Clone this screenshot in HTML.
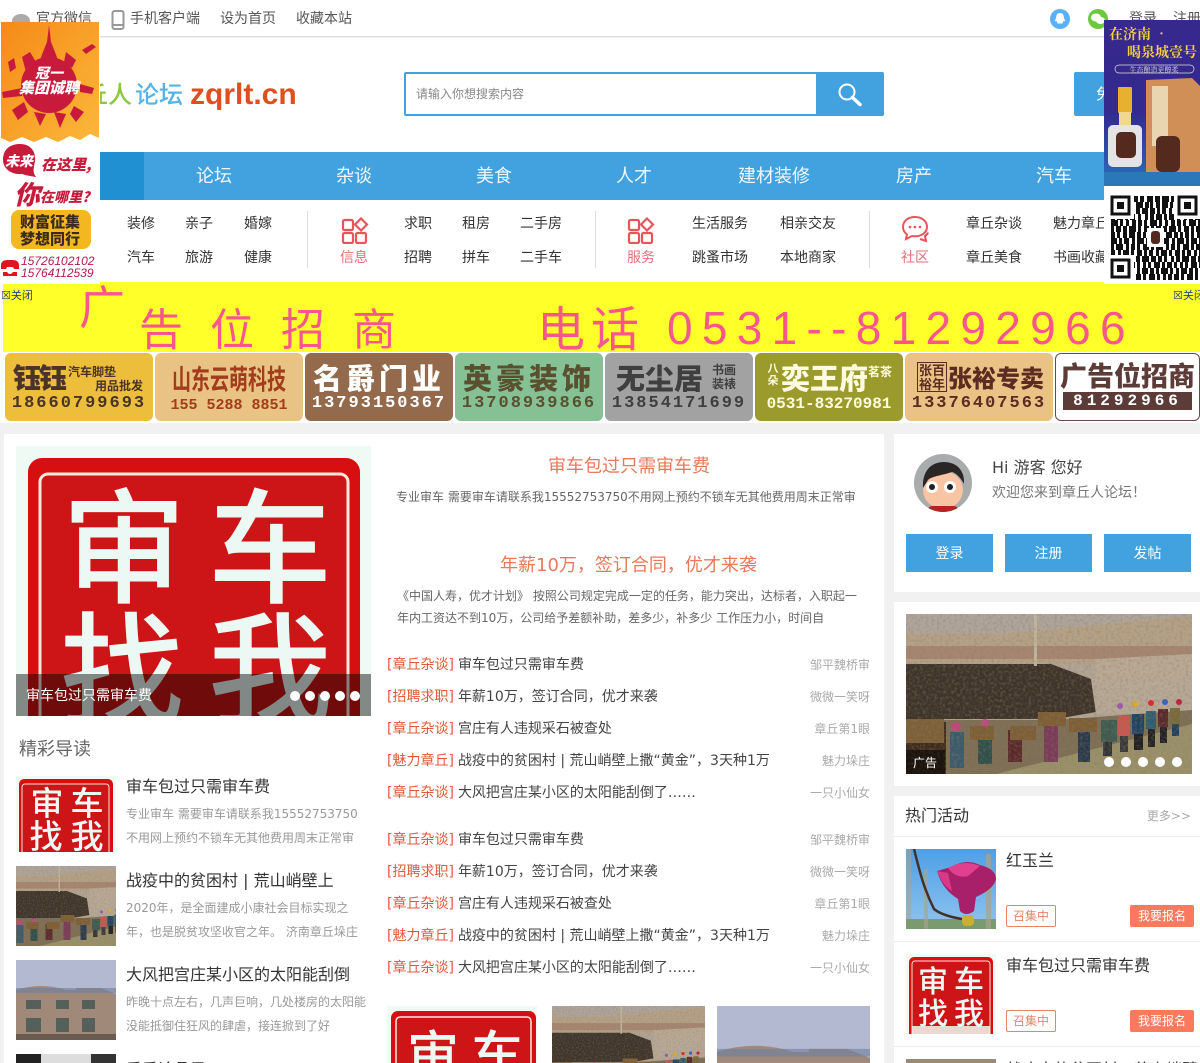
<!DOCTYPE html>
<html lang="zh">
<head>
<meta charset="utf-8">
<title>章丘人论坛</title>
<style>
html,body{margin:0;padding:0;width:1200px;height:1063px;overflow:hidden;}
#p{width:1200px;height:1063px;position:relative;overflow:hidden;background:#f1f1f1;font-family:"DejaVu Sans","WenQuanYi Zen Hei","Noto Sans CJK SC",sans-serif;color:#333;}
.a{position:absolute;white-space:nowrap;line-height:20px;}
.b{position:absolute;}
.sub{font-size:14px;color:#333;}
.nav{font-size:18px;color:#fff;width:100px;text-align:center;top:167px;opacity:.92;}
.li{font-size:14px;color:#444;left:387px;}
.li span{color:#e0593a;margin-right:4px;}
.au{font-size:12px;color:#aaa;right:330px;}
.t1{font-size:16px;color:#333;left:126px;}
.d1{font-size:12px;color:#999;left:126px;width:232px;overflow:hidden;}
.tile{position:absolute;top:353px;width:148px;height:68px;border-radius:6px;overflow:hidden;text-align:center;font-family:"Noto Sans CJK SC",sans-serif;font-weight:900;}
.tile .h{position:absolute;left:0;right:0;top:6px;font-size:29px;line-height:36px;white-space:nowrap;}
.tile .s{position:absolute;white-space:nowrap;font-size:12px;line-height:14px;font-weight:700;}
.tile .p{position:absolute;left:0;right:0;top:41px;font-size:17px;line-height:20px;font-family:"Liberation Mono",monospace;font-weight:700;letter-spacing:2px;white-space:nowrap;}
.btn{position:absolute;top:534px;width:87px;height:38px;background:#42a2df;color:#fff;font-size:14px;line-height:40px;text-align:center;overflow:hidden;}
.zj{position:absolute;left:1006px;width:48px;height:20px;border:1px solid #e8836b;border-radius:2px;color:#e8836b;font-size:12px;line-height:20px;text-align:center;}
.bm{position:absolute;left:1130px;width:64px;height:22px;background:#fb7a5e;border-radius:2px;color:#fff;font-size:12px;line-height:22px;text-align:center;}
.dot{position:absolute;border-radius:50%;background:#fff;}
</style>
</head>
<body>
<div id="p">
<svg width="0" height="0" style="position:absolute">
<defs>
<filter id="noise" x="0" y="0" width="100%" height="100%"><feTurbulence type="fractalNoise" baseFrequency=".35" numOctaves="2" seed="4"/><feColorMatrix values="0 0 0 0 0.25 0 0 0 0 0.2 0 0 0 0 0.15 0 0 0 1 -.42"/></filter>
<symbol id="hill" viewBox="0 0 286 160" preserveAspectRatio="xMidYMin slice">
<rect width="286" height="160" fill="#b3a594"/>
<rect width="286" height="18" fill="#b0a59b"/>
<path d="M0 20H75L95 20 286 2V70L200 50 0 50Z" fill="#b5a186"/>
<path d="M0 32H286V45H0Z" fill="#a3806a" opacity=".8"/>
<path d="M190 45L286 40V100H190Z" fill="#baa994"/>
<path d="M0 50H145L185 65 190 98 150 105H0Z" fill="#3e3429"/>
<path d="M185 65H286V100H190Z" fill="#b8a996"/>
<path d="M0 106H150L286 96V160H0Z" fill="#7d6e54"/>
<path d="M90 160L286 110V160Z" fill="#9a9068"/>
<rect x="128" y="0" width="3" height="52" fill="#c0b49a"/>
<g>
<rect x="0" y="108" width="40" height="52" fill="#3e2c1e"/><rect x="0" y="105" width="38" height="24" fill="#7d6038"/>
<circle cx="50" cy="113" r="5" fill="#c0457a"/><rect x="44" y="118" width="14" height="36" fill="#3b5a6a"/>
<circle cx="79" cy="109" r="4" fill="#c04a80"/><rect x="72" y="114" width="14" height="36" fill="#2f4f4a"/><rect x="64" y="112" width="24" height="14" fill="#7e5e34"/>
<rect x="102" y="116" width="14" height="32" fill="#5a2a28"/><rect x="104" y="112" width="26" height="14" fill="#7e5e34"/>
<rect x="132" y="98" width="28" height="14" fill="#7e5e34"/><rect x="138" y="112" width="14" height="36" fill="#7a3a58"/>
<rect x="163" y="104" width="28" height="14" fill="#7e5e34"/><rect x="172" y="118" width="12" height="30" fill="#2a3a4a"/>
<rect x="195" y="106" width="16" height="22" fill="#3f5a50"/><rect x="197" y="128" width="9" height="14" fill="#333"/>
<rect x="212" y="102" width="12" height="20" fill="#c8574f"/><rect x="214" y="122" width="8" height="16" fill="#3a3a3a"/>
<rect x="226" y="100" width="12" height="20" fill="#1f4460"/><rect x="228" y="120" width="9" height="16" fill="#222"/>
<rect x="240" y="97" width="10" height="18" fill="#2a6070"/><rect x="242" y="115" width="7" height="18" fill="#222"/>
<rect x="252" y="95" width="10" height="18" fill="#5a2a2a"/><rect x="254" y="113" width="7" height="16" fill="#222"/>
<rect x="264" y="94" width="10" height="16" fill="#7a6a3a"/><rect x="266" y="110" width="7" height="12" fill="#245"/>
<circle cx="214" cy="92" r="3" fill="#9a5ab0"/><circle cx="229" cy="90" r="3" fill="#e0b020"/><circle cx="245" cy="89" r="3" fill="#e02830"/><circle cx="259" cy="88" r="3" fill="#3a60c0"/><circle cx="273" cy="88" r="3" fill="#c02040"/>
</g>
<rect width="286" height="160" filter="url(#noise)"/>
</symbol>
<symbol id="bld" viewBox="0 0 100 80" preserveAspectRatio="xMidYMin slice">
<rect width="100" height="80" fill="#b4b9d2"/>
<path d="M0 30Q25 22 50 30H60V28H85L100 34V80H0Z" fill="#a1897a"/>
<path d="M0 28H100V33H0Z" fill="#6a7ea0" opacity=".6"/>
<g fill="#55605a"><rect x="10" y="40" width="15" height="9"/><rect x="40" y="40" width="13" height="9"/><rect x="66" y="40" width="13" height="9"/><rect x="10" y="58" width="15" height="14"/><rect x="40" y="58" width="13" height="14"/><rect x="66" y="58" width="13" height="14"/></g>
<rect y="74" width="100" height="6" fill="#6a5a50"/>
</symbol>
</defs>
</svg>

<!-- header white area -->
<div class="b" style="left:0;top:0;width:1200px;height:423px;background:#fff"></div>
<div class="b" style="left:0;top:0;width:1200px;height:36px;background:#fff;border-bottom:1px solid #ddd;box-shadow:0 1px 1px #eee"></div>
<svg class="b" style="left:10px;top:12px" width="22" height="14"><ellipse cx="11" cy="9" rx="9" ry="7" fill="#aaa"/></svg>
<div class="a" style="left:36px;top:9px;font-size:14px;color:#555">官方微信</div>
<svg class="b" style="left:111px;top:10px" width="14" height="20"><rect x="1.500" y="1" width="11" height="18" rx="2" fill="none" stroke="#999" stroke-width="2"/><rect x="2" y="14" width="10" height="2" fill="#999"/></svg>
<div class="a" style="left:130px;top:9px;font-size:14px;color:#555">手机客户端</div>
<div class="a" style="left:220px;top:9px;font-size:14px;color:#555">设为首页</div>
<div class="a" style="left:296px;top:9px;font-size:14px;color:#555">收藏本站</div>
<svg class="b" style="left:1050px;top:9px" width="20" height="20"><circle cx="10" cy="10" r="10" fill="#5ab0fb"/><path d="M10 4c-2.800 0-3.800 2-3.800 4.400L4.800 12c.6.6 1 .2 1.400-.5.3 1 .9 1.700 1.400 2-.8.4-.6 1.200 1 1h2.800c1.600.2 1.800-.6 1-1 .5-.3 1.100-1 1.400-2 .4.700.8 1.100 1.400.500L13.800 8.400C13.800 6 12.800 4 10 4Z" fill="#fff"/></svg>
<svg class="b" style="left:1088px;top:9px" width="20" height="20"><circle cx="10" cy="10" r="10" fill="#6cc83c"/><ellipse cx="8" cy="8.500" rx="5" ry="4" fill="#fff"/><ellipse cx="12.500" cy="11.500" rx="4.500" ry="3.500" fill="#fff"/></svg>
<div class="a" style="left:1129px;top:9px;font-size:14px;color:#555">登录</div>
<div class="a" style="left:1173px;top:9px;font-size:14px;color:#555">注册</div>

<!-- logo -->
<div class="a" style="left:84px;top:76px;font-size:24px;line-height:34px;font-weight:500;font-family:'Noto Sans CJK SC',sans-serif;color:#8cc63f">丘人</div>
<div class="a" style="left:135px;top:76px;font-size:24px;line-height:34px;font-weight:500;font-family:'Noto Sans CJK SC',sans-serif;color:#55b4e6">论坛</div>
<div class="a" style="left:190px;top:78px;font-size:30px;line-height:34px;font-weight:700;font-family:'Liberation Sans',sans-serif;color:#df4f1d">zqrlt.cn</div>

<!-- search -->
<div class="b" style="left:404px;top:72px;width:476px;height:40px;border:2px solid #42a2df;border-radius:2px;background:#fff"></div>
<div class="a" style="left:416px;top:84px;font-size:12px;color:#888">请输入你想搜索内容</div>
<div class="b" style="left:816px;top:72px;width:68px;height:44px;background:#42a2df;border-radius:0 2px 2px 0"></div>
<svg class="b" style="left:836px;top:82px" width="28" height="26"><circle cx="11" cy="10" r="7.500" fill="none" stroke="#fff" stroke-width="2"/><path d="M16.500 15.500L24 22.500" stroke="#fff" stroke-width="3.500" stroke-linecap="round"/></svg>
<div class="b" style="left:1074px;top:72px;width:126px;height:44px;background:#42a2df;border-radius:2px 0 0 2px"></div>
<div class="a" style="left:1096px;top:84px;font-size:15px;color:#fff">免费发布</div>

<!-- nav -->
<div class="b" style="left:0;top:152px;width:1200px;height:48px;background:#42a2df"></div>
<div class="b" style="left:0;top:152px;width:144px;height:48px;background:#2090d3"></div>
<div class="a nav" style="left:164px">论坛</div>
<div class="a nav" style="left:304px">杂谈</div>
<div class="a nav" style="left:444px">美食</div>
<div class="a nav" style="left:584px">人才</div>
<div class="a nav" style="left:724px">建材装修</div>
<div class="a nav" style="left:864px">房产</div>
<div class="a nav" style="left:1004px">汽车</div>

<!-- sub nav -->
<div class="a sub" style="left:127px;top:214px">装修</div>
<div class="a sub" style="left:185px;top:214px">亲子</div>
<div class="a sub" style="left:244px;top:214px">婚嫁</div>
<div class="a sub" style="left:127px;top:248px">汽车</div>
<div class="a sub" style="left:185px;top:248px">旅游</div>
<div class="a sub" style="left:244px;top:248px">健康</div>
<div class="b" style="left:307px;top:211px;width:1px;height:57px;background:#ddd"></div>
<svg class="b" style="left:341px;top:217px" width="28" height="27" fill="none" stroke="#e8545a" stroke-width="2.200"><rect x="2" y="3" width="10" height="10" rx="1.500"/><rect x="2" y="16" width="10" height="10" rx="1.500"/><rect x="15" y="16" width="10" height="10" rx="1.500"/><path d="M20 1.500L26 7.500 20 13.500 14 7.500Z"/></svg>
<div class="a" style="left:340px;top:248px;font-size:14px;color:#e2707a">信息</div>
<div class="a sub" style="left:404px;top:214px">求职</div>
<div class="a sub" style="left:462px;top:214px">租房</div>
<div class="a sub" style="left:520px;top:214px">二手房</div>
<div class="a sub" style="left:404px;top:248px">招聘</div>
<div class="a sub" style="left:462px;top:248px">拼车</div>
<div class="a sub" style="left:520px;top:248px">二手车</div>
<div class="b" style="left:595px;top:211px;width:1px;height:57px;background:#ddd"></div>
<svg class="b" style="left:627px;top:217px" width="28" height="27" fill="none" stroke="#e8545a" stroke-width="2.200"><rect x="2" y="3" width="10" height="10" rx="1.500"/><rect x="2" y="16" width="10" height="10" rx="1.500"/><rect x="15" y="16" width="10" height="10" rx="1.500"/><path d="M20 1.500L26 7.500 20 13.500 14 7.500Z"/></svg>
<div class="a" style="left:627px;top:248px;font-size:14px;color:#e2707a">服务</div>
<div class="a sub" style="left:692px;top:214px">生活服务</div>
<div class="a sub" style="left:780px;top:214px">相亲交友</div>
<div class="a sub" style="left:692px;top:248px">跳蚤市场</div>
<div class="a sub" style="left:780px;top:248px">本地商家</div>
<div class="b" style="left:869px;top:211px;width:1px;height:57px;background:#ddd"></div>
<svg class="b" style="left:900px;top:214px" width="32" height="30" fill="none" stroke="#e8545a" stroke-width="2"><path d="M15 3C8 3 3 7 3 13c0 3.500 2 6 4 7.500L6 25l6-3c1 .2 2 .3 3 .3 7 0 12-4 12-9.500S22 3 15 3Z"/><path d="M20 25l6 2-1-5c1.500-1 2.500-2 3-3.500" stroke-width="2"/><g fill="#e8545a" stroke="none"><circle cx="10" cy="13" r="1.300"/><circle cx="15" cy="13" r="1.300"/><circle cx="20" cy="13" r="1.300"/></g></svg>
<div class="a" style="left:901px;top:248px;font-size:14px;color:#e2707a">社区</div>
<div class="a sub" style="left:966px;top:214px">章丘杂谈</div>
<div class="a sub" style="left:1053px;top:214px">魅力章丘</div>
<div class="a sub" style="left:966px;top:248px">章丘美食</div>
<div class="a sub" style="left:1053px;top:248px">书画收藏</div>

<!-- yellow banner -->
<div class="b" style="left:3px;top:282px;width:1197px;height:70px;background:#ffff2a;overflow:hidden"></div>
<div class="a" style="left:79px;top:280px;font-size:46px;line-height:50px;color:#f9578c;font-family:'Noto Sans CJK SC',sans-serif;font-weight:400">广</div>
<div class="a" style="left:139px;top:301px;font-size:44px;line-height:50px;letter-spacing:27px;color:#f9578c;font-family:'Noto Sans CJK SC',sans-serif;font-weight:400">告位招商</div>
<div class="a" style="left:537px;top:300px;font-size:48px;line-height:50px;letter-spacing:6px;color:#f9578c;font-family:'Noto Sans CJK SC',sans-serif;font-weight:400">电话</div>
<div class="a" style="left:667px;top:303px;font-size:46px;line-height:50px;letter-spacing:9.300px;color:#f9578c;font-family:'Liberation Sans',sans-serif">0531--81292966</div>
<div class="a" style="left:1px;top:286px;font-size:11px;color:#247">☒关闭</div>
<div class="a" style="left:1173px;top:286px;font-size:11px;color:#247;width:27px;overflow:hidden">☒关闭</div>

<!-- tiles -->
<div class="tile" style="left:5px;background:#ecbe3c;color:#4a3328">
  <div class="h" style="text-align:left;padding-left:8px;letter-spacing:-2px;font-size:28px">钰钰</div>
  <div class="s" style="left:63px;top:12px">汽车脚垫</div><div class="s" style="left:90px;top:26px">用品批发</div>
  <div class="p">18660799693</div></div>
<div class="tile" style="left:155px;background:#e9c383;color:#a23c1c">
  <div class="h" style="font-size:19px;font-weight:700;transform:scaleY(1.45);top:8px">山东云萌科技</div>
  <div class="p" style="font-size:15px;letter-spacing:0;top:43px">155 5288 8851</div></div>
<div class="tile" style="left:305px;background:#936b4c;color:#fff"><div class="h" style="letter-spacing:4px">名爵门业</div><div class="p">13793150367</div></div>
<div class="tile" style="left:455px;background:#85c195;color:#5a5030"><div class="h" style="letter-spacing:4px">英豪装饰</div><div class="p">13708939866</div></div>
<div class="tile" style="left:605px;background:#a2a2a2;color:#3f3f3f">
  <div class="h" style="text-align:left;padding-left:11px">无尘居</div>
  <div class="s" style="left:107px;top:10px">书画</div><div class="s" style="left:107px;top:24px">装裱</div>
  <div class="p">13854171699</div></div>
<div class="tile" style="left:755px;background:#9b9a2d;color:#fffbe0">
  <div class="s" style="left:12px;top:9px;font-size:11px;line-height:12px;white-space:normal;width:12px">八朵</div>
  <div class="h" style="text-align:left;padding-left:26px">奕王府</div>
  <div class="s" style="left:113px;top:12px">茗茶</div>
  <div class="p" style="font-size:16px;letter-spacing:0">0531-83270981</div></div>
<div class="tile" style="left:905px;background:#eac286;color:#5c2c20">
  <div class="s" style="left:12px;top:9px;width:28px;white-space:normal;font-size:13px;line-height:14px;border:1px solid #5c2c20">张百裕年</div>
  <div class="h" style="text-align:left;padding-left:43px;font-size:24px">张裕专卖</div>
  <div class="p">13376407563</div></div>
<div class="tile" style="left:1055px;width:143px;background:#fff;border:1px solid #6b4a46;height:66px;color:#5c3c38"><div class="h" style="top:3px;font-size:27px">广告位招商</div><div class="p" style="left:7px;right:7px;top:38px;height:18px;line-height:18px;background:#5c3c38;color:#fff;letter-spacing:4px;font-size:16px">81292966</div></div>

<!-- main panels -->
<div class="b" style="left:4px;top:434px;width:880px;height:629px;background:#fff"></div>
<div class="b" style="left:894px;top:434px;width:306px;height:158px;background:#fff"></div>
<div class="b" style="left:894px;top:602px;width:306px;height:184px;background:#fff"></div>
<div class="b" style="left:894px;top:796px;width:306px;height:267px;background:#fff"></div>

<!-- large stamp -->
<svg class="b" style="left:16px;top:446px" width="355" height="270" viewBox="0 0 355 270">
<rect width="355" height="270" fill="#eefaf3"/>
<rect x="12" y="12" width="332" height="270" rx="14" fill="#d80f10"/>
<rect x="24" y="28" width="308" height="260" rx="8" fill="#cd1416" stroke="#f6e9dc" stroke-width="3"/>
<text x="108" y="147" text-anchor="middle" font-size="124" font-family="'Noto Sans CJK SC',sans-serif" font-weight="500" fill="#ecf8f4">审</text>
<text x="254" y="147" text-anchor="middle" font-size="124" font-family="'Noto Sans CJK SC',sans-serif" font-weight="500" fill="#ecf8f4">车</text>
<text x="106" y="270" text-anchor="middle" font-size="124" font-family="'Noto Sans CJK SC',sans-serif" font-weight="500" fill="#ecf8f4">找</text>
<text x="254" y="270" text-anchor="middle" font-size="124" font-family="'Noto Sans CJK SC',sans-serif" font-weight="500" fill="#ecf8f4">我</text>
</svg>
<div class="b" style="left:16px;top:674px;width:355px;height:42px;background:rgba(0,0,0,.45)"></div>
<div class="a" style="left:26px;top:686px;font-size:14px;color:#fff">审车包过只需审车费</div>
<div class="dot" style="left:290px;top:691px;width:10px;height:10px"></div>
<div class="dot" style="left:305px;top:691px;width:10px;height:10px"></div>
<div class="dot" style="left:320px;top:691px;width:10px;height:10px"></div>
<div class="dot" style="left:335px;top:691px;width:10px;height:10px"></div>
<div class="dot" style="left:350px;top:691px;width:10px;height:10px"></div>

<!-- guide -->
<div class="a" style="left:19px;top:740px;font-size:18px;color:#666">精彩导读</div>
<svg class="b" style="left:16px;top:776px" width="100" height="76" viewBox="0 0 100 76">
<rect width="100" height="76" fill="#eefaf3"/>
<rect x="3" y="3" width="94" height="90" rx="5" fill="#d80f10"/>
<rect x="6" y="8" width="87" height="85" rx="3" fill="#cd1416" stroke="#f6e9dc" stroke-width="1"/>
<text x="31" y="39" text-anchor="middle" font-size="33" font-family="'Noto Sans CJK SC',sans-serif" font-weight="500" fill="#ecf8f4">审</text>
<text x="71" y="39" text-anchor="middle" font-size="33" font-family="'Noto Sans CJK SC',sans-serif" font-weight="500" fill="#ecf8f4">车</text>
<text x="30" y="72" text-anchor="middle" font-size="33" font-family="'Noto Sans CJK SC',sans-serif" font-weight="500" fill="#ecf8f4">找</text>
<text x="71" y="72" text-anchor="middle" font-size="33" font-family="'Noto Sans CJK SC',sans-serif" font-weight="500" fill="#ecf8f4">我</text>
</svg>
<div class="a t1" style="top:777px">审车包过只需审车费</div>
<div class="a d1" style="top:804px">专业审车 需要审车请联系我15552753750</div>
<div class="a d1" style="top:828px">不用网上预约不锁车无其他费用周末正常审</div>
<svg class="b" style="left:16px;top:866px" width="100" height="80"><use href="#hill" width="100" height="80"/></svg>
<div class="a t1" style="top:871px">战疫中的贫困村 | 荒山峭壁上</div>
<div class="a d1" style="top:898px;width:222px">2020年，是全面建成小康社会目标实现之年</div>
<div class="a d1" style="top:922px">年，也是脱贫攻坚收官之年。 济南章丘垛庄</div>
<svg class="b" style="left:16px;top:960px" width="100" height="80"><use href="#bld" width="100" height="80"/></svg>
<div class="a t1" style="top:965px">大风把宫庄某小区的太阳能刮倒</div>
<div class="a d1" style="top:992px;width:242px">昨晚十点左右，几声巨响，几处楼房的太阳能</div>
<div class="a d1" style="top:1016px">没能抵御住狂风的肆虐，接连掀到了好</div>
<div class="b" style="left:16px;top:1054px;width:100px;height:9px;background:linear-gradient(90deg,#222 0 25%,#ddd 25% 75%,#333 75%)"></div>
<div class="a t1" style="top:1060px;height:3px;overflow:hidden">重重论品墨</div>

<!-- middle -->
<div class="a" style="left:548px;top:457px;font-size:18px;color:#e8795b">审车包过只需审车费</div>
<div class="a" style="left:396px;top:487px;font-size:12px;color:#666">专业审车 需要审车请联系我15552753750不用网上预约不锁车无其他费用周末正常审</div>
<div class="a" style="left:500px;top:556px;font-size:18px;color:#e8795b">年薪10万，签订合同，优才来袭</div>
<div class="a" style="left:397px;top:586px;font-size:12px;color:#666">《中国人寿，优才计划》 按照公司规定完成一定的任务，能力突出，达标者，入职起一</div>
<div class="a" style="left:397px;top:608px;font-size:12px;color:#666">年内工资达不到10万，公司给予差额补助，差多少，补多少 工作压力小，时间自</div>

<div class="a li" style="top:655px"><span>[章丘杂谈]</span>审车包过只需审车费</div><div class="a au" style="top:655px">邹平魏桥审</div>
<div class="a li" style="top:687px"><span>[招聘求职]</span>年薪10万，签订合同，优才来袭</div><div class="a au" style="top:687px">微微一笑呀</div>
<div class="a li" style="top:719px"><span>[章丘杂谈]</span>宫庄有人违规采石被查处</div><div class="a au" style="top:719px">章丘第1眼</div>
<div class="a li" style="top:751px"><span>[魅力章丘]</span>战疫中的贫困村 | 荒山峭壁上撒“黄金”，3天种1万</div><div class="a au" style="top:751px">魅力垛庄</div>
<div class="a li" style="top:783px"><span>[章丘杂谈]</span>大风把宫庄某小区的太阳能刮倒了……</div><div class="a au" style="top:783px">一只小仙女</div>

<div class="a li" style="top:830px"><span>[章丘杂谈]</span>审车包过只需审车费</div><div class="a au" style="top:830px">邹平魏桥审</div>
<div class="a li" style="top:862px"><span>[招聘求职]</span>年薪10万，签订合同，优才来袭</div><div class="a au" style="top:862px">微微一笑呀</div>
<div class="a li" style="top:894px"><span>[章丘杂谈]</span>宫庄有人违规采石被查处</div><div class="a au" style="top:894px">章丘第1眼</div>
<div class="a li" style="top:926px"><span>[魅力章丘]</span>战疫中的贫困村 | 荒山峭壁上撒“黄金”，3天种1万</div><div class="a au" style="top:926px">魅力垛庄</div>
<div class="a li" style="top:958px"><span>[章丘杂谈]</span>大风把宫庄某小区的太阳能刮倒了……</div><div class="a au" style="top:958px">一只小仙女</div>

<svg class="b" style="left:387px;top:1006px" width="150" height="57" viewBox="0 0 150 57">
<rect width="150" height="57" fill="#eefaf3"/>
<path d="M4 57V12a7 7 0 0 1 7-7H142a7 7 0 0 1 7 7V57Z" fill="#d80f10"/>
<path d="M9 57V15a4 4 0 0 1 4-4H140a4 4 0 0 1 4 4V57" fill="#cd1416" stroke="#f6e9dc" stroke-width="1.500"/>
<text x="46" y="68" text-anchor="middle" font-size="52" font-family="'Noto Sans CJK SC',sans-serif" font-weight="500" fill="#ecf8f4">审</text>
<text x="110" y="68" text-anchor="middle" font-size="52" font-family="'Noto Sans CJK SC',sans-serif" font-weight="500" fill="#ecf8f4">车</text>
</svg>
<svg class="b" style="left:552px;top:1006px" width="153" height="57"><use href="#hill" width="153" height="57"/></svg>
<svg class="b" style="left:717px;top:1006px" width="153" height="57"><use href="#bld" width="153" height="57"/></svg>

<!-- right user panel -->
<svg class="b" style="left:914px;top:454px" width="58" height="58" viewBox="0 0 58 58">
<circle cx="29" cy="29" r="29" fill="#a9acac"/>
<clipPath id="c1"><circle cx="29" cy="29" r="29"/></clipPath>
<g clip-path="url(#c1)">
<ellipse cx="29" cy="36" rx="20" ry="19" fill="#f7c4a4"/>
<path d="M9 34C8 16 18 8 30 8s21 8 20 22c-3-6-8-11-12-12-8 3-20 4-24 8Z" fill="#2a2626"/>
<circle cx="18" cy="33" r="6" fill="#fff"/><circle cx="18" cy="33" r="3" fill="#222"/>
<circle cx="36" cy="33" r="6" fill="#fff"/><circle cx="36" cy="33" r="3" fill="#222"/>
<rect x="14" y="52" width="30" height="8" rx="4" fill="#b52424"/>
</g>
</svg>
<div class="a" style="left:992px;top:458px;font-size:16px;color:#444">Hi 游客 您好</div>
<div class="a" style="left:992px;top:483px;font-size:14px;color:#777">欢迎您来到章丘人论坛！</div>
<div class="btn" style="left:906px">登录</div>
<div class="btn" style="left:1005px">注册</div>
<div class="btn" style="left:1104px">发帖</div>

<svg class="b" style="left:906px;top:614px" width="286" height="160"><use href="#hill" width="286" height="160"/></svg>
<div class="b" style="left:906px;top:750px;width:39px;height:24px;background:rgba(0,0,0,.55)"></div>
<div class="a" style="left:913px;top:753px;font-size:12px;color:#fff">广告</div>
<div class="dot" style="left:1104px;top:757px;width:10px;height:10px"></div>
<div class="dot" style="left:1121px;top:757px;width:10px;height:10px"></div>
<div class="dot" style="left:1138px;top:757px;width:10px;height:10px"></div>
<div class="dot" style="left:1155px;top:757px;width:10px;height:10px"></div>
<div class="dot" style="left:1172px;top:757px;width:10px;height:10px"></div>

<!-- hot events -->
<div class="a" style="left:905px;top:806px;font-size:16px;color:#333">热门活动</div>
<div class="a" style="right:9px;top:806px;font-size:12px;color:#aaa">更多&gt;&gt;</div>
<div class="b" style="left:894px;top:836px;width:306px;height:1px;background:#eee"></div>
<svg class="b" style="left:906px;top:849px" width="90" height="80" viewBox="0 0 90 80">
<defs><linearGradient id="sky" x1="0" y1="0" x2="0" y2="1"><stop offset="0" stop-color="#4f9fe6"/><stop offset="1" stop-color="#8fc4ee"/></linearGradient></defs>
<rect width="90" height="80" fill="url(#sky)"/>
<rect y="70" width="90" height="10" fill="#7a9a70"/>
<rect x="80" y="5" width="5" height="75" fill="#a8a48c" opacity=".7"/>
<rect x="18" y="20" width="4" height="60" fill="#a8a48c" opacity=".6"/>
<rect x="0" y="0" width="5" height="70" fill="#a8a48c" opacity=".5"/>
<path d="M8 0C14 24 18 40 28 60c6 5 16 8 28 10" fill="none" stroke="#43302a" stroke-width="2.500"/>
<path d="M31 22L45 18Q60 9 74 16Q90 20 90 30Q88 40 70 48L68 62Q60 68 54 62L52 50Q36 40 31 22Z" fill="#a8206a"/>
<path d="M42 19Q58 10 74 17L62 27Q50 30 42 19Z" fill="#e0408e"/>
<path d="M31 22L42 24 46 42Q36 36 31 22Z" fill="#d83a88"/>
<rect x="56" y="66" width="12" height="11" rx="4" fill="#c8b030"/>
</svg>
<div class="a" style="left:1006px;top:851px;font-size:16px;color:#333">红玉兰</div>
<div class="zj" style="top:905px">召集中</div>
<div class="bm" style="top:905px">我要报名</div>
<div class="b" style="left:894px;top:941px;width:306px;height:1px;background:#eee"></div>
<svg class="b" style="left:906px;top:954px" width="90" height="80" viewBox="0 0 90 80">
<rect width="90" height="80" fill="#eefaf3"/>
<rect x="3" y="3" width="84" height="85" rx="5" fill="#d80f10"/>
<rect x="6" y="7" width="78" height="85" rx="3" fill="#cd1416" stroke="#f6e9dc" stroke-width="1"/>
<text x="27" y="38" text-anchor="middle" font-size="30" font-family="'Noto Sans CJK SC',sans-serif" font-weight="500" fill="#ecf8f4">审</text>
<text x="63" y="38" text-anchor="middle" font-size="30" font-family="'Noto Sans CJK SC',sans-serif" font-weight="500" fill="#ecf8f4">车</text>
<text x="27" y="70" text-anchor="middle" font-size="30" font-family="'Noto Sans CJK SC',sans-serif" font-weight="500" fill="#ecf8f4">找</text>
<text x="63" y="70" text-anchor="middle" font-size="30" font-family="'Noto Sans CJK SC',sans-serif" font-weight="500" fill="#ecf8f4">我</text>
<rect x="6" y="72" width="78" height="8" fill="#eefaf3" opacity=".85"/>
</svg>
<div class="a" style="left:1006px;top:956px;font-size:16px;color:#333">审车包过只需审车费</div>
<div class="zj" style="top:1010px">召集中</div>
<div class="bm" style="top:1010px">我要报名</div>
<div class="b" style="left:894px;top:1046px;width:306px;height:1px;background:#eee"></div>
<svg class="b" style="left:906px;top:1059px" width="90" height="4"><rect width="90" height="4" fill="#9a8a78"/></svg>
<div class="a" style="left:1006px;top:1060px;height:3px;overflow:hidden;font-size:16px;color:#333">战疫中的贫困村 | 荒山峭壁上</div>

<!-- left float ad -->
<div class="b" style="left:0;top:22px;width:100px;height:262px;background:#fff"></div>
<svg class="b" style="left:0;top:22px" width="100" height="262" viewBox="0 0 100 262">
<defs><linearGradient id="og" x1="0" y1="0" x2="1" y2="1"><stop offset="0" stop-color="#f58a18"/><stop offset="1" stop-color="#fbb83a"/></linearGradient></defs>
<path d="M1 0H99V116L90 112 80 118 70 114 58 120 46 115 34 120 22 115 10 120 1 116Z" fill="url(#og)"/>
<circle cx="49" cy="63" r="28" fill="#c81b3c"/>
<path d="M49 3L51 20L55 30 58 38H40L43 30 47 20Z" fill="#c81b3c"/>
<path d="M22 35L30 30 36 40 26 50ZM66 30L76 38 72 46 64 40ZM80 62L94 66 92 72 80 70ZM2 70L22 66 22 74 3 76ZM12 88L24 80 28 90 18 98ZM74 84L84 90 76 100 70 92ZM34 90L40 104 46 92ZM54 90L60 106 66 92Z" fill="#c81b3c"/>
<path d="M82 28L92 22 96 25 86 32ZM8 40L14 36 16 46 10 50Z" fill="#c81b3c"/>
<text x="49" y="56" text-anchor="middle" font-size="14" font-weight="900" font-style="italic" font-family="'Noto Sans CJK SC',sans-serif" fill="#fff">冠一</text>
<text x="49" y="71" text-anchor="middle" font-size="15" font-weight="900" font-style="italic" font-family="'Noto Sans CJK SC',sans-serif" fill="#fff">集团诚聘</text>
<path d="M3 138C3 125 13 122 20 122c11 0 16 8 15 17-1 6-3 11 1 16-7-1-11-2-14-3-10 1-19-5-19-14Z" fill="#c81b3c"/>
<text x="19" y="144" text-anchor="middle" font-size="14" font-weight="900" font-style="italic" font-family="'Noto Sans CJK SC',sans-serif" fill="#fff">未来</text>
<text x="41" y="148" font-size="15" font-weight="900" font-style="italic" font-family="'Noto Sans CJK SC',sans-serif" fill="#c81b3c">在这里,</text>
<text x="14" y="182" font-size="26" font-weight="900" font-style="italic" font-family="'Noto Sans CJK SC',sans-serif" fill="#c81b3c">你</text>
<text x="40" y="180" font-size="14" font-weight="900" font-style="italic" font-family="'Noto Sans CJK SC',sans-serif" fill="#c81b3c">在哪里?</text>
<rect x="11" y="188" width="80" height="39" rx="8" fill="#f3b81f"/>
<text x="50" y="205" text-anchor="middle" font-size="15" font-weight="900" font-family="'Noto Sans CJK SC',sans-serif" fill="#3a2a20">财富征集</text>
<text x="50" y="222" text-anchor="middle" font-size="15" font-weight="900" font-family="'Noto Sans CJK SC',sans-serif" fill="#3a2a20">梦想同行</text>
<path d="M1 244C1 238 5 238 10 238s9 0 9 6v3h-5l-1-2H7l-1 2H1ZM3 250h14v4H3Z" fill="#e0141c"/>
<circle cx="10" cy="249" r="3" fill="#fff"/>
<text x="21" y="243" font-size="12" font-style="italic" font-family="'Liberation Sans',sans-serif" fill="#b01c4a">15726102102</text>
<text x="21" y="255" font-size="12" font-style="italic" font-family="'Liberation Sans',sans-serif" fill="#b01c4a">15764112539</text>
</svg>

<!-- right float ad -->
<div class="b" style="left:1104px;top:20px;width:96px;height:264px;background:#fff"></div>
<svg class="b" style="left:1104px;top:20px" width="96" height="166" viewBox="0 0 96 166">
<defs><linearGradient id="pp" x1="0" y1="0" x2="0" y2="1"><stop offset="0" stop-color="#37288c"/><stop offset=".55" stop-color="#33298f"/><stop offset=".85" stop-color="#2b55b0"/><stop offset="1" stop-color="#2a78b8"/></linearGradient></defs>
<rect width="96" height="166" fill="url(#pp)"/>
<text x="5" y="19" font-size="14" font-weight="700" font-family="'Noto Serif CJK SC',serif" fill="#f5d040">在济南 •</text>
<text x="23" y="37" font-size="14" font-weight="700" font-family="'Noto Serif CJK SC',serif" fill="#f5d040">喝泉城壹号</text>
<rect x="11" y="45" width="79" height="8" rx="4" fill="none" stroke="#ddd" stroke-width=".7"/>
<text x="50" y="52" text-anchor="middle" font-size="7" font-family="'Noto Serif CJK SC',serif" fill="#ddd">生态酿造更醇柔</text>
<rect x="14" y="67" width="14" height="26" rx="1" fill="#e8b030"/>
<rect x="15" y="92" width="12" height="13" fill="#f0d890"/>
<rect x="4" y="105" width="34" height="42" rx="5" fill="#e4e4e4"/>
<rect x="12" y="112" width="20" height="26" rx="5" fill="#552a1e"/>
<path d="M42 60L88 58 96 66V152H42Z" fill="#d08f56"/>
<rect x="48" y="66" width="16" height="60" fill="#e9d6b0"/>
<rect x="52" y="116" width="24" height="36" rx="6" fill="#552a1e"/>
<rect y="152" width="96" height="14" fill="#2a78b8"/>
</svg>
<svg class="b" style="left:1110px;top:195px" width="90" height="86" viewBox="0 0 90 86" fill="none" stroke="#111">
<g stroke-width="6">
<line x1="1" y1="4" x2="90" y2="4" stroke-dasharray="5 2 7 2 3 3 5 2 4 3 6 2"/>
<line x1="1" y1="10" x2="90" y2="10" stroke-dasharray="3 3 4 2 6 2 3 2 7 2 4 1"/>
<line x1="1" y1="16" x2="90" y2="16" stroke-dasharray="5 2 3 2 4 3 3 3 4 2 6 2"/>
<line x1="1" y1="22" x2="90" y2="22" stroke-dasharray="4 2 6 2 3 2 5 3 3 4 3 2"/>
<line x1="1" y1="28" x2="90" y2="28" stroke-dasharray="7 2 3 3 3 3 4 2 4 2 3 3"/>
<line x1="1" y1="34" x2="90" y2="34" stroke-dasharray="3 2 5 2 4 2 7 2 3 3 5 2"/>
<line x1="1" y1="40" x2="90" y2="40" stroke-dasharray="4 2 3 3 4 2 6 2 4 2 3 2"/>
<line x1="1" y1="46" x2="90" y2="46" stroke-dasharray="6 2 3 2 5 3 3 2 7 2 3 2"/>
<line x1="1" y1="52" x2="90" y2="52" stroke-dasharray="3 2 7 3 3 2 4 2 3 3 6 2"/>
<line x1="1" y1="58" x2="90" y2="58" stroke-dasharray="4 3 3 2 6 2 3 3 5 2 3 2"/>
<line x1="1" y1="64" x2="90" y2="64" stroke-dasharray="5 2 4 2 3 4 3 2 4 2 7 2"/>
<line x1="1" y1="70" x2="90" y2="70" stroke-dasharray="3 3 6 2 3 2 5 2 3 3 3 2"/>
<line x1="1" y1="76" x2="90" y2="76" stroke-dasharray="4 2 3 2 7 2 3 3 3 2 6 2"/>
<line x1="1" y1="82" x2="90" y2="82" stroke-dasharray="6 2 3 3 3 2 4 2 5 2 3 3"/>
</g>
<g fill="#fff" stroke="none"><rect x="0" y="0" width="24" height="24"/><rect x="65" y="0" width="25" height="24"/><rect x="0" y="60" width="24" height="26"/><rect x="37" y="33" width="17" height="19"/></g>
<g stroke-width="3"><rect x="2" y="2" width="17" height="17"/><rect x="69" y="2" width="17" height="17"/><rect x="2" y="65" width="17" height="17"/></g>
<g fill="#111" stroke="none"><rect x="7" y="7" width="7" height="7"/><rect x="74" y="7" width="7" height="7"/><rect x="7" y="70" width="7" height="7"/></g>
<rect x="41" y="36" width="9" height="13" rx="3" fill="#552a1e" stroke="none"/>
</svg>
</div>
</body>
</html>
